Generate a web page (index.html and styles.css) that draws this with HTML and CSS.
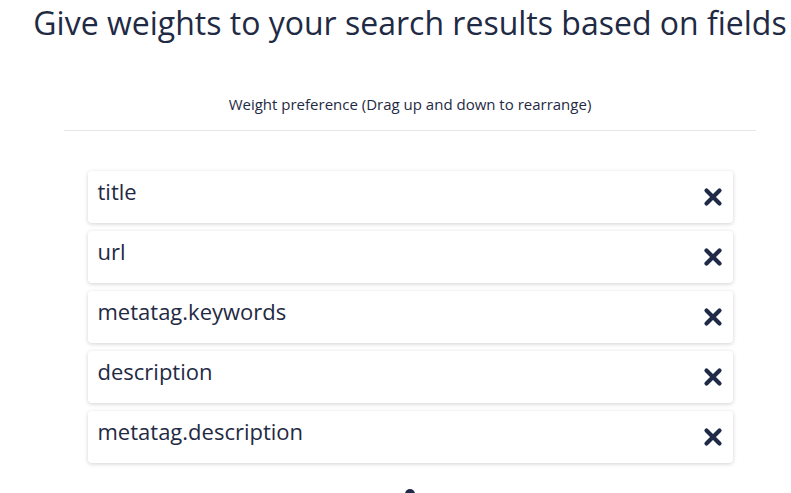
FILE: index.html
```html
<!DOCTYPE html>
<html>
<head>
<meta charset="utf-8">
<link rel="stylesheet" href="styles.css">
</head>
<body>
<div class="page">
  <h1 class="title">Give weights to your search results based on fields</h1>
  <p class="subtitle">Weight preference (Drag up and down to rearrange)</p>
  <hr class="divider">
  <ul class="list">
    <li class="card"><span class="label">title</span><span class="remove"><svg viewBox="0 0 20 20" width="20" height="20"><path d="M3.5 3.5L16.5 16.5M16.5 3.5L3.5 16.5" stroke="#1f2a48" stroke-width="4.2" stroke-linecap="round"/></svg></span></li>
    <li class="card"><span class="label">url</span><span class="remove"><svg viewBox="0 0 20 20" width="20" height="20"><path d="M3.5 3.5L16.5 16.5M16.5 3.5L3.5 16.5" stroke="#1f2a48" stroke-width="4.2" stroke-linecap="round"/></svg></span></li>
    <li class="card"><span class="label">metatag.keywords</span><span class="remove"><svg viewBox="0 0 20 20" width="20" height="20"><path d="M3.5 3.5L16.5 16.5M16.5 3.5L3.5 16.5" stroke="#1f2a48" stroke-width="4.2" stroke-linecap="round"/></svg></span></li>
    <li class="card"><span class="label">description</span><span class="remove"><svg viewBox="0 0 20 20" width="20" height="20"><path d="M3.5 3.5L16.5 16.5M16.5 3.5L3.5 16.5" stroke="#1f2a48" stroke-width="4.2" stroke-linecap="round"/></svg></span></li>
    <li class="card"><span class="label">metatag.description</span><span class="remove"><svg viewBox="0 0 20 20" width="20" height="20"><path d="M3.5 3.5L16.5 16.5M16.5 3.5L3.5 16.5" stroke="#1f2a48" stroke-width="4.2" stroke-linecap="round"/></svg></span></li>
  </ul>
  <div class="more"><span class="dot"></span></div>
</div>
</body>
</html>
```
FILE: styles.css
```css
html, body {
  margin: 0;
  padding: 0;
  background: #ffffff;
  overflow: hidden;
}
body {
  font-family: "Open Sans", "Noto Sans", sans-serif;
  color: #1f2a44;
}
.page {
  width: 820px;
  display: flex;
  flex-direction: column;
  align-items: center;
}
.title {
  margin: 0;
  padding-top: 1px;
  font-size: 32px;
  font-weight: 400;
  line-height: 44px;
  white-space: nowrap;
}
.subtitle {
  margin: 49px 0 0;
  font-size: 15px;
  line-height: 20px;
}
.divider {
  width: 692px;
  margin: 16px 0 0;
  border: 0;
  border-top: 1px solid #e6e6e6;
}
.list {
  list-style: none;
  margin: 40px 0 0;
  padding: 0;
  width: 645px;
  display: flex;
  flex-direction: column;
  gap: 8px;
}
.card {
  height: 52px;
  box-sizing: border-box;
  padding: 5px 10px 0 10px;
  background: #fff;
  border-radius: 4px;
  box-shadow: 0 1px 4px rgba(0,0,0,0.18);
  display: flex;
  justify-content: space-between;
  align-items: flex-start;
}
.label {
  font-size: 22px;
  line-height: 30px;
}
.remove {
  margin-top: 11px;
  display: flex;
}
.more {
  margin-top: 26px;
  display: flex;
  justify-content: center;
}
.dot {
  width: 10px;
  height: 10px;
  border-radius: 50%;
  background: #1f2a48;
}
```
